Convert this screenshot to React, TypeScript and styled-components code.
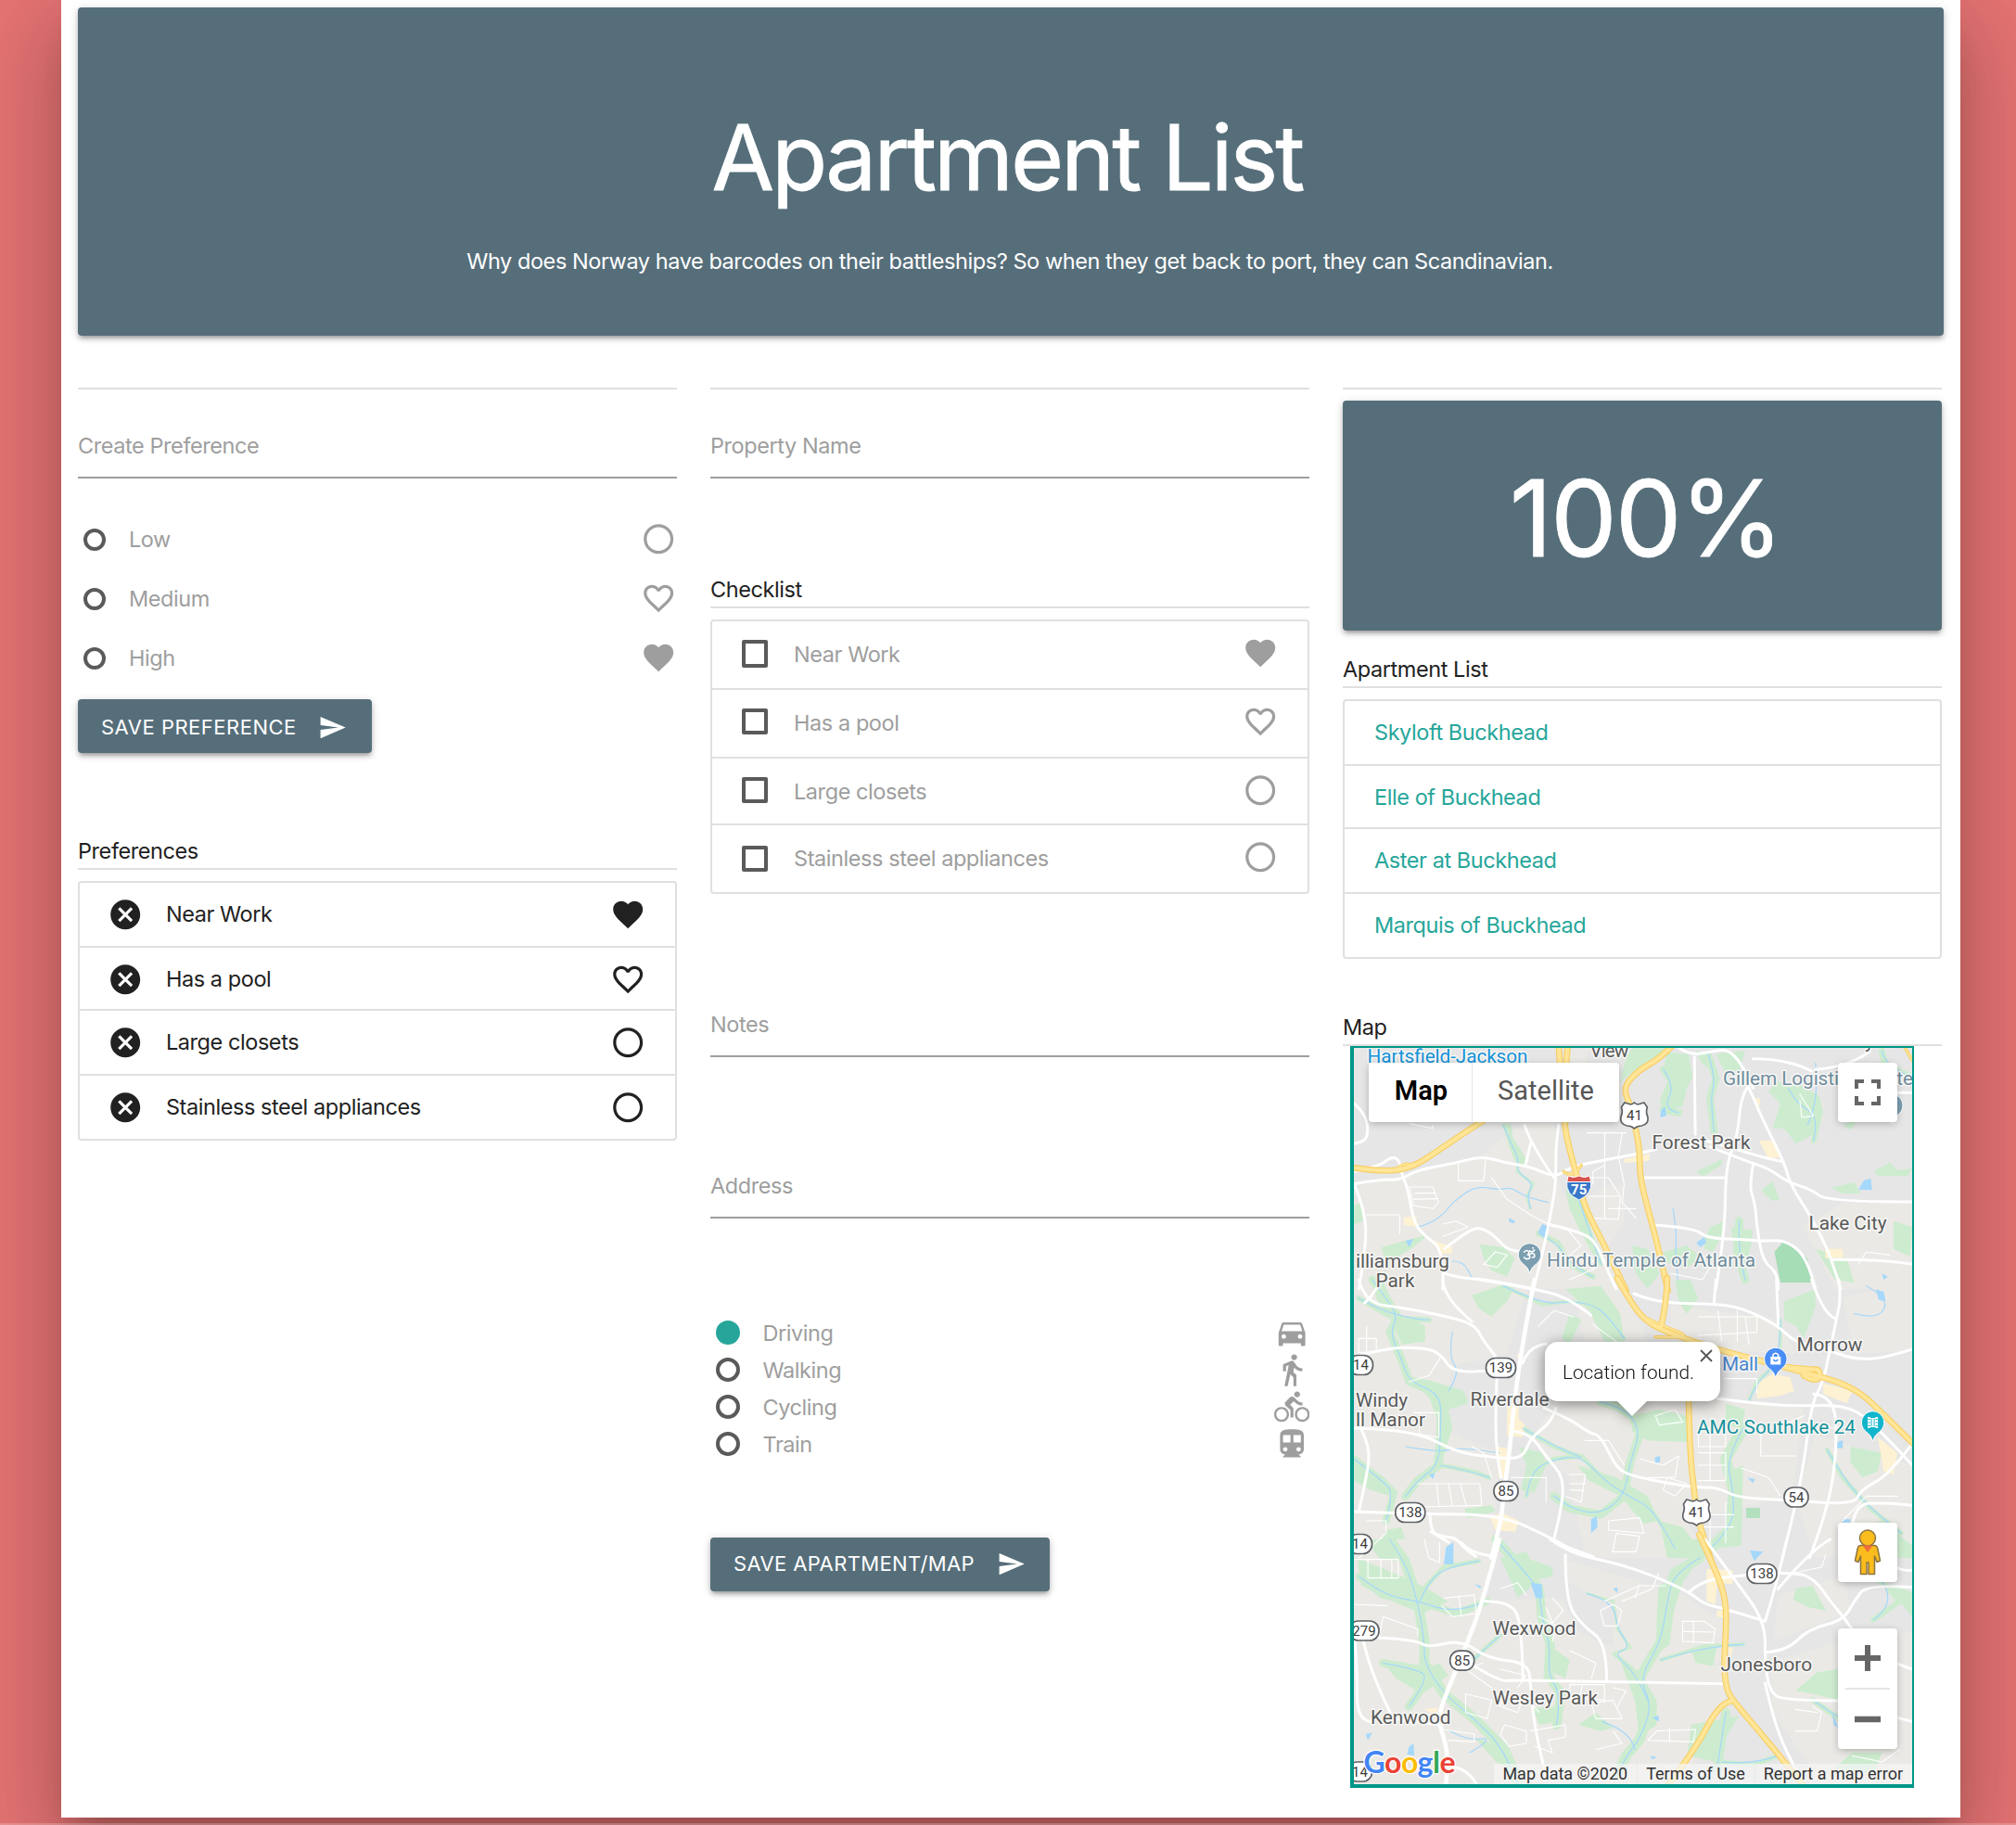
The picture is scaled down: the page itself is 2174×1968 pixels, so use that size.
import React from "react";
import styled, { createGlobalStyle, css } from "styled-components";
import {
  MdCancel,
  MdDirectionsBike,
  MdDirectionsCar,
  MdDirectionsTransit,
  MdDirectionsWalk,
  MdFavorite,
  MdFavoriteBorder,
  MdRadioButtonUnchecked,
  MdSend,
} from "react-icons/md";

/* ---------- palette ---------- */

const slate = "#566e7a";
const teal = "#26a69a";
const grey = "#9e9e9e";
const rule = "#e0e0e0";
const ink = "#212121";

const raised = css`
  box-shadow: 0 4px 4px 0 rgba(0, 0, 0, 0.14), 0 6px 2px -4px rgba(0, 0, 0, 0.12),
    0 2px 10px 0 rgba(0, 0, 0, 0.2);
`;

const GlobalStyle = createGlobalStyle`
  * { box-sizing: border-box; }
  html, body { margin: 0; padding: 0; }
  body {
    height: 1968px;
    overflow: hidden;
    background: #e57373;
    color: ${ink};
    font: 400 23.5px/36px Inter, "Liberation Sans", sans-serif;
    letter-spacing: -0.43px;
  }
`;

/* ---------- page frame ---------- */

const Page = styled.div`
  height: 1968px;
  display: flex;
  flex-direction: column;
  justify-content: space-between;
`;

const Container = styled.main`
  width: 2048px;
  height: 1960px;
  margin-left: 66px;
  padding: 8px 18px 0;
  background: #fff;
  box-shadow: 0 48px 76px 6px rgba(0, 0, 0, 0.14), 0 18px 92px 16px rgba(0, 0, 0, 0.12),
    0 22px 30px -14px rgba(0, 0, 0, 0.2);
`;

const BottomEdge = styled.div`
  width: 100%;
  height: 2px;
  background: rgba(255, 255, 255, 0.22);
  z-index: 1;
`;

const Hero = styled.header`
  ${raised}
  height: 354px;
  display: flex;
  flex-direction: column;
  align-items: center;
  border-radius: 4px;
  background: ${slate};
  color: #fff;
`;

const HeroTitle = styled.h1`
  margin: 103px 0 0;
  padding-right: 8px;
  font-size: 98px;
  font-weight: 400;
  line-height: 118px;
  letter-spacing: -2.9px;
  -webkit-text-stroke: 0.8px #fff;
`;

const HeroText = styled.p`
  margin: 35px 2px 0 0;
`;

const Columns = styled.div`
  display: grid;
  grid-template-columns: repeat(3, 646px);
  column-gap: 36px;
  margin-top: 56px;
`;

const Column = styled.section`
  display: flex;
  flex-direction: column;
  align-items: stretch;
  border-top: 2px solid ${rule};
`;

/* ---------- form parts ---------- */

const Field = styled.label<{ $gap?: number }>`
  height: 96px;
  margin-top: ${(p) => p.$gap ?? 0}px;
  padding-top: 43px;
  border-bottom: 2px solid ${grey};
  color: ${grey};
`;

const RadioGroup = styled.div<{ $gap: number }>`
  display: flex;
  flex-direction: column;
  margin-top: ${(p) => p.$gap}px;
`;

const RadioRow = styled.label<{ $height: number; $size: number; $end: number }>`
  display: grid;
  grid-template-columns: ${(p) => p.$size}px 1fr auto;
  column-gap: ${(p) => (p.$size === 24 ? 25 : 24.5)}px;
  align-items: center;
  height: ${(p) => p.$height}px;
  padding: 0 ${(p) => p.$end}px 0 6px;
  color: ${grey};
  svg {
    display: block;
    margin-top: ${(p) => (p.$size === 24 ? -2 : 0)}px;
  }
`;

const RadioLabel = styled.span<{ $drop: number }>`
  padding-top: ${(p) => p.$drop}px;
`;

const RadioDot = styled.span<{ $size: number; $on?: boolean }>`
  width: ${(p) => p.$size}px;
  height: ${(p) => p.$size}px;
  border-radius: 50%;
  border: 4px solid ${(p) => (p.$on ? teal : "#5a5a5a")};
  background: ${(p) => (p.$on ? teal : "transparent")};
`;

const RaisedButton = styled.button<{ $gap: number; $lift: number; $track: number }>`
  ${raised}
  align-self: flex-start;
  display: flex;
  align-items: flex-start;
  gap: ${(p) => 24 - p.$track}px;
  height: 58px;
  margin: ${(p) => p.$gap}px 0 0;
  padding: ${(p) => 12 - p.$lift}px 26.3px 0 25px;
  border: 0;
  border-radius: 4px;
  background: ${slate};
  color: #fff;
  font: 400 22px/36px Inter, "Liberation Sans", sans-serif;
  letter-spacing: ${(p) => p.$track}px;
  text-transform: uppercase;
  svg {
    display: block;
    margin-top: 3px;
  }
`;

/* ---------- lists ---------- */

const SectionTitle = styled.h2<{ $gap: number }>`
  height: 38px;
  margin: ${(p) => p.$gap}px 0 0;
  border-bottom: 2px solid ${rule};
  font: inherit;
`;

const Collection = styled.ul<{ $rows: string }>`
  display: grid;
  grid-template-rows: ${(p) => p.$rows};
  margin: 12px 0 0;
  padding: 0;
  border: 2px solid ${rule};
  border-radius: 4px;
  list-style: none;
`;

const Checkbox = styled.span`
  width: 28px;
  height: 28px;
  margin: 20px 0 0 -1px;
  border: 4px solid #5a5a5a;
  border-radius: 2px;
`;

const Item = styled.li<{ $muted?: boolean }>`
  display: flex;
  align-items: flex-start;
  padding: 0 36px 0 33px;
  color: ${(p) => (p.$muted ? grey : ink)};
  border-bottom: 2px solid ${rule};
  &:first-child ${Checkbox} {
    height: 30px;
  }
  &:last-child {
    border-bottom: 0;
  }
  &:last-child ${Checkbox} {
    margin-top: 22px;
  }
`;

const ItemIcon = styled.span`
  display: flex;
  align-items: center;
  height: 69px;
  margin: 0 -4px 0 -3px;
`;

const ItemText = styled.span<{ $top: number; $start: number }>`
  flex: 1;
  margin: ${(p) => p.$top}px 0 0 ${(p) => p.$start}px;
`;

const AptLink = styled.a`
  margin: 16px 0 0 -1px;
  color: ${teal};
`;

const Score = styled.div`
  ${raised}
  height: 248px;
  display: flex;
  align-items: center;
  justify-content: center;
  margin-top: 12px;
  padding: 6px 0 0 7px;
  border-radius: 4px;
  background: ${slate};
  color: #fff;
  font-size: 114px;
  line-height: 140px;
  letter-spacing: -2.2px;
  -webkit-text-stroke: 0.8px #fff;
`;

/* ---------- map ---------- */

const MapFrame = styled.div`
  position: relative;
  width: 608px;
  height: 800px;
  margin-left: 8px;
  border: solid #009688;
  border-width: 2px 2px 4px 4px;
  overflow: hidden;
  font-family: Roboto, "Liberation Sans", sans-serif;
  letter-spacing: 0;
`;

const MapCanvas = styled.svg`
  display: block;
  width: 602px;
  height: 794px;
`;

const MapControl = styled.div<{ $top: number }>`
  position: absolute;
  top: ${(p) => p.$top}px;
  right: 16px;
  width: 64px;
  min-height: 64px;
  display: flex;
  flex-direction: column;
  align-items: center;
  justify-content: center;
  border-radius: 4px;
  background: #fff;
  box-shadow: 0 2px 8px -1px rgba(0, 0, 0, 0.3);
`;

const ZoomCell = styled.div`
  display: flex;
  align-items: center;
  justify-content: center;
  height: 64px;
  width: 48px;
  & + & {
    border-top: 2px solid #e6e6e6;
    height: 66px;
  }
`;

const TypeSwitch = styled.div`
  position: absolute;
  top: 16px;
  left: 16px;
  display: flex;
  height: 64px;
  border-radius: 4px;
  background: #fff;
  box-shadow: 0 2px 8px -1px rgba(0, 0, 0, 0.3);
`;

const TypeOption = styled.span<{ $on?: boolean }>`
  width: ${(p) => (p.$on ? 111 : 159)}px;
  text-align: center;
  font-size: 29px;
  line-height: 60px;
  font-weight: ${(p) => (p.$on ? 600 : 400)};
  padding-left: ${(p) => (p.$on ? 2 : 0)}px;
  color: ${(p) => (p.$on ? "#000" : "#565656")};
  & + & {
    border-left: 1px solid #e6e6e6;
  }
`;

const InfoWindow = styled.div`
  position: absolute;
  left: 206px;
  top: 317px;
  width: 189px;
  height: 64px;
  padding: 15px 0 0 19px;
  border-radius: 14px;
  background: #fff;
  color: #111;
  font-size: 20.8px;
  font-weight: 300;
  line-height: 36px;
  white-space: nowrap;
  filter: drop-shadow(0 3px 8px rgba(0, 0, 0, 0.45));
  &::after {
    content: "";
    position: absolute;
    left: 77px;
    top: 63px;
    border: solid transparent;
    border-width: 17px 17px 0;
    border-top-color: #fff;
  }
  svg {
    position: absolute;
    right: 8px;
    top: 8px;
  }
`;

const Credits = styled.div`
  position: absolute;
  right: 0;
  bottom: 0;
  display: flex;
  height: 22px;
  font-size: 18px;
  color: #333;
  white-space: nowrap;
`;

const Credit = styled.span`
  padding: 0 10px 0 9px;
  background: rgba(245, 245, 245, 0.72);
  line-height: 21px;
  & + & {
    border-left: 1px solid rgba(225, 225, 225, 0.5);
  }
`;

type Pt = string;

/* Rounds the corners of a run of "x,y" points by curving through the midpoints. */
const curve = (pts: Pt) => {
  const p = pts.split(" ").map((s) => s.split(",").map(Number));
  let d = `M${p[0][0]} ${p[0][1]}`;
  for (let i = 1; i < p.length - 1; i++) {
    const [x, y] = p[i];
    const [nx, ny] = p[i + 1];
    const last = i === p.length - 2;
    d += `Q${x} ${y} ${last ? nx : (x + nx) / 2} ${last ? ny : (y + ny) / 2}`;
  }
  if (p.length === 2) d += `L${p[1][0]} ${p[1][1]}`;
  return d;
};

/* Terrain is drafted on three sheets stacked from north to south. */
const sheets = [
  "translate(-20 -40) scale(0.42092 0.33333)",
  "translate(-20 250) scale(0.42092 0.33333)",
  "translate(-20 530) scale(0.46811 0.33333)",
];

const suburbs: Pt[][] = [
  [
    "48,560 160,540 370,470 480,360 560,360 570,540 600,640 700,560 740,570 740,690 700,760 740,900 48,900",
    "590,130 650,120 640,180 590,200",
    "1300,620 1478,620 1478,900 1280,900 1200,700",
  ],
  [
    "48,0 500,0 440,240 300,280 270,480 420,560 400,900 48,900",
    "600,0 730,0 800,200 990,380 1200,420 1170,700 900,780 950,900 640,900 600,640 500,520 560,400 640,200",
    "860,80 1130,130 1180,240 1000,230 860,170",
    "1230,500 1478,600 1478,900 1230,900 1180,720",
    "1300,60 1478,0 1478,230 1330,240",
  ],
  [
    "43,0 370,0 340,200 520,190 560,300 620,340 890,410 900,520 800,792 43,792",
    "520,60 800,180 890,260 890,400 640,390 640,220 540,140",
    "1000,400 1160,330 1329,300 1329,792 1120,792 1010,560",
    "1020,180 1170,120 1190,230 1010,330",
  ],
];

const parks: Pt[][] = [
  [
    "730,230 745,150 760,120 855,120 820,150 770,190",
    "850,135 905,140 915,215 900,250 890,310 850,320 830,295 855,215 840,190",
    "925,130 960,140 955,185 935,165",
    "975,140 1050,128 1035,195 1000,200",
    "1130,230 1185,235 1240,275 1250,330 1225,400 1180,430 1150,380 1120,380 1140,300 1110,260",
    "925,520 990,480 990,498 940,538",
    "1090,580 1120,553 1138,610 1118,615",
    "1380,520 1420,490 1440,515 1478,510 1465,535 1390,535",
    "1270,572 1330,555 1345,590 1300,592",
    "1345,185 1400,165 1450,185 1455,205 1390,200",
    "945,740 960,700 1000,678 990,725 968,780 945,770",
    "1015,700 1070,710 1065,760 1050,830 1025,830",
    "1430,680 1478,700 1472,795 1430,770",
    "48,630 70,618 70,680 48,692",
    "118,765 160,750 240,722 200,765 130,818",
    "1300,370 1340,350 1320,385",
    "1230,770 1310,800 1330,880 1280,870",
    "840,780 900,760 940,800 900,830 850,815",
    "430,365 450,365 455,410 490,480 492,510 465,500 445,440",
    "590,575 615,590 650,700 690,800 670,810 630,720 600,640",
    "370,755 430,765 460,800 440,860 400,840 380,800",
    "760,760 800,770 830,850 800,900 770,850",
  ],
  [
    "350,50 420,20 460,25 440,70 400,120 365,90",
    "140,120 200,130 230,150 230,200 170,210",
    "180,310 240,325 330,360 340,400 290,420 300,480 270,600 250,590 270,480 240,380",
    "470,540 530,560 540,600 510,690 475,680 490,600",
    "620,600 720,640 800,700 830,780 790,790 730,700 650,650",
    "760,440 830,420 900,440 905,525 800,520 760,490",
    "1150,70 1230,30 1230,90 1200,190 1180,150 1150,130",
    "1000,400 1050,420 1040,480 1000,470",
    "1320,540 1400,560 1390,620 1350,640 1320,590",
    "830,780 890,800 920,850 910,900 850,900",
    "1010,620 1045,600 1040,860 970,870 1000,800",
    "130,810 170,800 180,850 150,900 110,870",
    "330,740 400,730 410,750 340,770",
    "1330,800 1400,780 1478,860 1478,900 1340,900",
    "48,590 100,620 140,700 90,680 48,650",
    "590,30 680,20 730,110 740,200 690,200 650,100",
    "600,110 630,130 600,210 580,190",
    "90,0 120,0 150,80 130,110 105,60",
    "870,0 910,0 930,60 900,110 880,70",
  ],
  [
    "50,60 120,100 200,150 260,200 200,240 130,200 60,150",
    "70,0 130,0 140,70 100,60",
    "440,60 500,90 500,120 460,130 430,90",
    "745,150 830,80 800,140 780,230 770,340 740,370 740,260",
    "1060,160 1100,150 1130,230 1090,220 1055,195",
    "455,545 520,540 510,590 470,600",
    "820,360 880,340 870,410 830,400",
    "1060,490 1110,430 1158,420 1158,520 1100,500",
    "650,370 700,430 740,520 740,600 700,640 690,520",
    "110,400 190,430 240,400 260,440 200,500 140,450",
    "820,600 930,570 900,640 880,720 810,700",
    "320,640 400,680 430,760 370,720",
    "1240,130 1329,170 1329,250 1300,200",
    "1190,690 1260,690 1240,760 1150,740",
    "380,60 440,40 470,130 420,190 400,120",
    "560,600 600,560 640,610 610,620",
    "780,0 860,0 850,60 790,50",
    "490,340 540,390 530,450 500,430",
  ],
];

const water: Pt[][] = [
  [
    "835,320 845,310 848,340 832,345",
    "1355,548 1372,543 1375,580 1340,578",
    "925,750 945,732 950,750 935,765",
    "445,670 460,680 458,688 445,683",
    "180,745 200,738 190,765",
    "530,690 550,700 535,735 520,715",
    "1400,850 1415,860 1405,870",
    "495,800 515,800 505,820",
  ],
  [
    "818,575 832,570 832,590 820,595",
    "1385,30 1405,40 1410,70 1392,65",
    "285,870 300,840 300,900 282,900",
    "655,775 670,765 672,800 655,820",
    "1285,525 1300,520 1300,545 1285,545",
    "1055,640 1075,645 1070,658",
    "240,630 255,625 250,645",
    "1300,775 1320,775 1318,785 1298,785",
  ],
  [
    "255,25 272,10 272,80 250,80",
    "450,140 475,145 478,190 462,190",
    "955,35 985,40 965,70",
    "320,145 335,150 335,160",
    "70,630 85,625 75,650",
    "730,575 745,570 745,590",
    "170,670 180,660 182,700 165,695",
    "1145,560 1158,610 1148,600",
    "640,160 650,155 650,175",
    "725,700 742,705 730,712",
  ],
];

/* Each creek carries the width of the green belt along its banks. */
const creeks: [number, Pt][][] = [
  [
    [3, "430,370 450,430 470,480 465,520 508,560 490,600 500,640"],
    [0, "210,700 240,690 280,655 300,620 360,565 420,580 450,570 490,605 545,620"],
    [6, "1160,250 1180,300 1240,340 1225,420"],
    [8, "955,140 975,220 960,280 970,390"],
    [0, "865,640 875,720 870,790 880,900"],
    [7, "1400,130 1410,180 1470,210"],
    [8, "840,190 870,240 840,320 880,330"],
    [4, "620,600 660,740 680,820"],
    [9, "1035,680 1030,780 1050,870"],
    [0, "300,810 330,810 350,870 380,900"],
    [6, "520,720 570,750 600,820 660,860"],
    [0, "1230,170 1240,290 1210,370"],
  ],
  [
    [9, "95,0 130,60 160,120 140,170 170,260 190,330 270,370 270,480 265,600 210,650 180,700"],
    [4, "430,20 530,80 600,70 660,80 700,120 740,190"],
    [6, "60,60 150,125 240,130"],
    [9, "680,395 720,410 760,440 780,500 755,590 740,700 680,760 600,740 560,700"],
    [5, "490,700 500,620 560,580 630,570 690,650 750,700 800,730 840,800 870,870"],
    [0, "300,170 290,250 320,300 290,360"],
    [12, "1045,480 1000,580 1020,680 1020,800 960,870"],
    [5, "270,600 350,620 395,640"],
    [0, "180,540 270,560 310,540 420,560"],
    [4, "1140,130 1140,260 1080,330 1060,390"],
    [0, "1330,110 1390,130 1420,60 1360,20"],
    [5, "1260,550 1300,640 1370,740 1450,820"],
    [5, "480,480 560,540 630,575"],
    [8, "48,580 120,650 150,690 130,780"],
  ],
  [
    [11, "125,0 160,70 190,200 205,330 205,400 250,500 320,580 390,680 420,792"],
    [10, "370,0 420,80 470,160 475,250 495,340 490,440 520,500 510,600"],
    [11, "840,60 780,110 765,200 750,330 700,450 730,540 700,650 670,700 650,760"],
    [3, "580,175 640,200 650,290 680,350 640,370 690,430 720,520"],
    [9, "110,400 190,420 215,450 170,540"],
    [5, "330,70 250,90 210,150 195,200"],
    [10, "900,560 890,640 880,740"],
    [0, "265,620 300,650 370,640 310,690"],
    [4, "750,390 850,345 940,340"],
    [0, "615,590 680,620 690,680"],
    [8, "55,120 110,180 190,200 280,240 350,200"],
    [6, "1100,520 1180,600 1250,640"],
    [6, "1250,120 1300,200 1240,260"],
    [5, "380,310 340,360 310,400"],
    [5, "890,720 960,730 1020,700"],
  ],
];

const lanes: Pt[][] = [
  [
    "645,395 745,395", "690,395 690,500 660,520 660,560", "735,395 725,470 740,560 735,620 770,670",
    "190,570 250,570 265,620 250,640 200,630 190,570", "205,590 255,590", "200,610 260,608",
    "80,660 165,660 165,720", "275,690 310,680 340,700 275,730", "315,490 315,550 380,550 385,480",
    "400,540 440,610 500,660 560,700", "640,540 700,540 730,600 725,675 650,670", "690,480 690,670",
    "650,600 725,600", "380,820 410,780 440,790 415,830 380,820", "570,800 650,790 670,830 600,870",
    "590,700 630,760 600,790", "1190,270 1225,340 1195,345 1190,290", "190,365 250,380 250,370",
    "1340,820 1360,780 1420,790", "700,640 770,640", "860,850 940,870 960,830",
  ],
  [
    "60,190 105,190 105,235 60,235 60,190", "80,150 80,235", "190,330 240,310 270,250",
    "200,430 265,430 265,510 215,500 215,430", "600,630 640,630 630,720 590,700", "600,660 640,660",
    "600,680 635,682", "210,660 370,660 375,730 220,735", "260,660 265,730", "290,660 300,730",
    "320,660 335,730", "780,580 840,600 880,570 870,640 800,640", "820,440 870,420 890,460 830,470 820,440",
    "930,480 1000,480 1000,540 930,540 930,480", "930,560 1000,560 1000,650 930,650", "960,480 960,650",
    "930,600 1000,600", "930,120 1080,120 1080,170 930,180", "980,100 990,200", "1030,100 1030,200",
    "1050,120 1060,210", "1090,480 1090,570 1180,570", "1130,480 1200,440", "660,145 720,200 740,260",
    "520,150 560,100 610,120", "700,780 780,770 790,820 700,810 700,780", "850,640 900,660 870,700 840,680 850,640",
    "80,780 130,780 130,820 60,900", "450,640 540,640 540,720", "1000,320 1080,320 1080,370",
    "1200,470 1280,480", "1300,780 1360,700 1440,700", "640,520 700,520 740,600", "960,720 960,860",
    "1000,720 1000,850", "930,760 1020,760", "930,800 1020,800", "1040,610 1110,640 1140,700",
    "720,820 780,830 770,880 710,880 720,820", "350,540 380,560 400,640",
  ],
  [
    "45,65 145,65 145,125 75,125 75,65", "105,65 105,125", "130,65 130,125", "250,190 320,180 325,240 270,250 245,215",
    "285,185 290,245", "380,160 420,140 440,180", "500,190 525,230 500,270 485,220", "540,470 620,470 620,520 540,510 540,470",
    "570,470 560,520", "640,480 670,490 650,540", "610,230 640,210 660,230 650,280 620,280 610,230",
    "800,265 850,265 875,290 870,335 800,330 800,265", "825,265 825,330", "800,298 872,300",
    "620,200 700,150 760,150", "700,150 690,190", "660,200 730,160 745,110", "390,600 440,620 440,660 400,670 380,630 390,600",
    "450,620 530,600 530,640 490,650 500,690 460,670", "720,650 825,655 830,615 740,620 720,650", "770,610 770,655",
    "250,615 320,630 320,655 260,650", "390,500 430,520 420,560 380,540 390,500", "590,530 640,520 660,580 600,580 590,530",
    "1050,110 1120,90 1130,50", "205,0 215,60 240,75 240,10", "340,400 300,420 360,480", "45,210 120,215",
    "100,320 110,250 190,290 190,310", "540,360 600,400 590,450", "1100,540 1120,560 1110,620 1060,620",
    "380,420 440,440 420,480", "470,250 510,280 500,330", "300,500 360,520 350,580 300,560 300,500",
    "640,620 660,660 600,680", "1190,700 1260,720 1300,680", "1060,550 1110,560", "430,500 470,560",
  ],
];

const roads: Pt[][] = [
  [
    "48,560 120,545 165,548 210,515 300,495 375,470 430,490 500,505 565,540 600,505 700,480 780,462 822,448",
    "545,690 640,718 672,760 700,850 720,900",
    "572,370 565,430 565,540 560,600 545,700 528,800 508,900",
    "960,440 1060,490 1110,510 1160,555 1220,578 1262,618 1478,618",
    "1055,240 1075,290 1090,340 1150,490 1165,560 1215,660 1245,730 1270,800 1295,900",
    "1060,240 1040,270 1030,410 1000,500 998,720 975,900",
    "1148,488 1110,480 1020,445 950,420",
    "785,540 998,540",
    "812,692 920,702 950,735 1040,740 1100,745 1155,742 1210,800 1230,900",
    "1070,500 1060,570 1075,620 1080,700 1095,810 1135,850 1135,900",
    "48,300 75,330 85,390 75,425 48,430",
    "48,520 110,505 145,470 165,485 170,530 185,570 200,680 225,725 280,775 275,900",
    "280,770 340,710 375,700 415,735 440,775 480,780",
    "280,850 320,865 400,870 510,900",
    "880,120 910,145 970,130 1010,125 1050,190 1070,250",
    "1070,155 1160,155 1220,195",
    "920,150 922,400",
    "485,370 500,430 560,540",
    "500,430 487,500",
    "1270,805 1400,803 1478,820",
    "48,560 75,640 80,760 60,900",
    "1370,130 1320,180 1230,190",
    "1440,265 1478,265",
  ],
  [
    "370,0 515,30 600,60 655,115",
    "60,0 75,75 180,92 310,125 360,150 380,200 420,260 412,330 410,560 425,640",
    "275,0 278,60 350,135",
    "120,0 90,60 75,75",
    "48,250 130,220 230,220 270,240 305,305 385,295",
    "540,208 495,215 480,270",
    "535,415 600,450 650,495 680,505 720,610 760,635 860,660 920,672 980,672 1030,705 1150,712 1330,728 1345,680 1420,630 1478,530",
    "765,45 820,75 970,78 1040,90 1130,145 1180,205 1260,225 1320,255 1400,257 1478,225",
    "975,0 970,78",
    "1130,0 1135,145",
    "1220,0 1250,110 1280,125",
    "1290,0 1295,60 1285,120 1265,240 1250,330 1220,400 1200,600 1170,780 1145,900",
    "980,385 1110,405 1200,408 1300,405 1370,450 1478,600",
    "1225,370 1280,375 1285,560 1260,750 1215,900",
    "48,480 200,485 310,558 400,575 480,580 500,510 555,460 565,415",
    "450,490 495,492 545,580 585,640 580,740 560,840",
    "48,750 220,758 425,760 560,840 600,870 660,895",
    "65,480 90,540 80,640 60,750",
    "242,760 245,815 270,830 310,835 330,870 360,895",
    "1478,730 1400,720 1330,728 1325,800",
    "245,815 290,850",
  ],
  [
    "495,0 540,45 640,75 720,110 815,170 850,210 900,225 990,265",
    "530,50 530,200 570,280 625,335 625,458",
    "852,0 920,130 990,265 990,400 1000,490 1030,522 1160,522",
    "1040,0 1020,130 990,265",
    "815,170 840,140 900,120 1060,105 1105,130 1140,200 1170,250 1190,290",
    "1140,0 1095,35 1020,160",
    "995,365 1040,360 1090,290 1170,262 1195,200 1225,145 1329,155",
    "100,318 185,325 212,350 290,325 350,385 445,400 450,480 460,620 480,735",
    "320,410 380,460 410,455 560,460 893,467",
    "345,200 405,200 430,280 432,455",
    "65,330 80,430 130,570",
    "990,465 1010,590 1050,720 1080,792",
    "290,10 310,45 365,55",
    "45,320 50,420 50,590 85,590",
    "130,580 240,600",
    "250,735 300,730 325,792",
    "1240,0 1280,110 1329,100",
    "1290,400 1329,420",
    "1290,575 1329,590",
  ],
];

const trunks: Pt[][] = [
  [],
  ["510,0 480,200 458,400 445,570 430,700 425,780 400,900"],
  ["378,0 340,200 300,350 240,550 240,600 262,700 255,792"],
];

const centres: Pt[][] = [
  [
    "175,668 208,665 208,700 175,692", "740,480 805,462 805,485 740,492", "1085,420 1120,420 1140,475 1110,478",
    "245,740 300,765 300,785 270,785", "1255,770 1300,770 1300,800 1255,800", "1065,280 1090,285 1085,310",
  ],
  [
    "1085,330 1120,305 1165,315 1175,360 1140,375 1080,385", "1250,335 1325,360 1310,400 1250,370",
    "440,400 470,410 470,450 485,470 480,510 440,505", "415,540 440,545 440,640 418,640",
    "395,765 430,755 470,780 460,815 410,810", "1390,510 1440,560 1430,630 1405,620", "465,240 482,240 475,290",
  ],
  ["855,95 915,100 915,145 880,140 875,210 855,200", "205,548 235,545 235,575", "878,230 895,230 895,255 878,250", "905,350 915,350 910,400"],
];

const freeways: Pt[][] = [
  [
    "48,508 130,522 200,505 260,455 330,395 380,355",
    "572,110 585,360 600,450 620,540 640,640 690,760 745,905",
    "595,120 588,200 590,360",
    "862,115 830,155 780,190 745,235 742,270 762,320 768,375 780,450 780,540 805,660 830,780 852,905",
    "1455,110 1478,160",
    "150,520 175,485 200,500",
    "585,520 605,545 630,500",
  ],
  [
    "722,-5 760,80 800,140 870,180 990,230 1090,262 1200,300 1290,330 1350,370 1400,430 1480,530",
    "850,-5 850,60 835,150",
    "1150,282 1210,290 1245,290 1235,335 1200,310",
    "905,380 908,560 920,690 928,780 962,905",
    "790,120 840,150 920,190 820,185",
  ],
  [
    "838,-15 880,110 900,200 900,300 895,400 900,480 915,520 1000,660 1078,795",
    "912,523 885,530 825,690 765,795",
  ],
];

interface Place {
  t: string;
  x: number;
  y: number;
  w: number;
  c?: string;
}

const places: Place[] = [
  { t: "Hartsfield-Jackson", x: 14.5, y: 16, w: 173, c: "#1592d8" },
  { t: "View", x: 254.4, y: 9.5, w: 42 },
  { t: "y", x: 551, y: 0, w: 10 },
  { t: "Gillem Logistics Cente", x: 398, y: 40, w: 205, c: "#6f8c9d" },
  { t: "Forest Park", x: 321.5, y: 108.5, w: 106 },
  { t: "Lake City", x: 490.5, y: 196, w: 84 },
  { t: "Hindu Temple of Atlanta", x: 208, y: 236, w: 225, c: "#6f8c9d" },
  { t: "illiamsburg", x: 2, y: 237, w: 101 },
  { t: "Park", x: 23.5, y: 258, w: 42 },
  { t: "Morrow", x: 477.5, y: 326.5, w: 71 },
  { t: "Mall", x: 397, y: 347.5, w: 39, c: "#4b86cf" },
  { t: "Riverdale", x: 125.5, y: 385.5, w: 85 },
  { t: "Windy", x: 2, y: 386.5, w: 56 },
  { t: "ll Manor", x: 2, y: 407.5, w: 75 },
  { t: "AMC Southlake 24", x: 370, y: 416, w: 171, c: "#14919c" },
  { t: "Wexwood", x: 149.5, y: 633, w: 90 },
  { t: "Wesley Park", x: 149.5, y: 707.5, w: 113.5 },
  { t: "Jonesboro", x: 395.5, y: 671.5, w: 98.5 },
  { t: "Kenwood", x: 18, y: 728.5, w: 86.5 },
];

const routes: [string, number, number][] = [
  ["14", 7.5, 342],
  ["139", 158.5, 345],
  ["85", 164, 478],
  ["138", 60.8, 501],
  ["54", 477, 484.5],
  ["14", 6.5, 535],
  ["138", 440, 567],
  ["279", 11, 628.5],
  ["85", 116.7, 660.7],
  ["14", 6.5, 780.5],
];

const RouteBadge = ({ n, x, y }: { n: string; x: number; y: number }) => {
  const w = n.length === 3 ? 32 : 26;
  return (
    <g>
      <rect x={x - w / 2} y={y - 10.5} width={w} height={21} rx={10} fill="#fff" stroke="#5f6367" strokeWidth={1.7} />
      <text x={x} y={y + 5.3} textAnchor="middle" fontSize={15} fill="#3c3c3c">
        {n}
      </text>
    </g>
  );
};

const UsShield = ({ x, y }: { x: number; y: number }) => (
  <g transform={`translate(${x} ${y})`}>
    <path
      d="M-10.500-13.500L-5.500-12Q-2.500-11 0-13.500Q2.500-11 5.500-12L10.500-13.500L14-8.500Q12-4 14.500 2Q16 9.500 8 11.500Q3 11.500 0 14.500Q-3 11.500-8 11.500Q-16 9.500-14.500 2Q-12-4-14-8.500Z"
      fill="#fff"
      stroke="#5f6367"
      strokeWidth={1.7}
    />
    <text y={5.5} textAnchor="middle" fontSize={15} fill="#3c3c3c">
      41
    </text>
  </g>
);

const PinShape = ({ x, y, c, children }: { x: number; y: number; c: string; children?: React.ReactNode }) => (
  <g transform={`translate(${x} ${y})`}>
    <path d="M0 20Q-1.500 14-7 10A12.200 12.200 0 1 1 7 10Q1.500 14 0 20Z" fill={c} stroke="#fff" strokeWidth={1} />
    {children}
  </g>
);

const Sheet = ({ i, layer }: { i: number; layer: "land" | "roads" }) => (
  <g transform={sheets[i]} fill="none" strokeLinejoin="round" strokeLinecap="round">
    {layer === "land" ? (
      <>
        {suburbs[i].map((p, k) => <polygon key={k} points={p} fill="#ebe9e5" />)}
        {creeks[i].map(([w, p], k) =>
          w > 0 ? <polyline key={k} points={p} stroke="#cdeccf" strokeWidth={w} vectorEffect="non-scaling-stroke" /> : null,
        )}
        {parks[i].map((p, k) => <polygon key={k} points={p} fill="#cdeccf" />)}
        {centres[i].map((p, k) => <polygon key={k} points={p} fill="#fdf2d3" />)}
        {creeks[i].map(([, p], k) => (
          <path key={k} d={curve(p)} stroke="#a5d8fb" strokeWidth={1.2} vectorEffect="non-scaling-stroke" />
        ))}
        {water[i].map((p, k) => <polygon key={k} points={p} fill="#a5d8fb" />)}
      </>
    ) : (
      <>
        {lanes[i].map((p, k) => (
          <polyline key={k} points={p} stroke="#fff" strokeWidth={1.1} vectorEffect="non-scaling-stroke" />
        ))}
        {roads[i].map((p, k) => (
          <path key={k} d={curve(p)} stroke="#fff" strokeWidth={3} vectorEffect="non-scaling-stroke" />
        ))}
        {trunks[i].map((p, k) => (
          <path key={k} d={curve(p)} stroke="#fff" strokeWidth={4.6} vectorEffect="non-scaling-stroke" />
        ))}
        {freeways[i].map((p, k) => (
          <path key={k} d={curve(p)} stroke="#f8cd62" strokeWidth={k > 3 ? 3.5 : 6.6} vectorEffect="non-scaling-stroke" />
        ))}
        {freeways[i].map((p, k) => (
          <path key={k} d={curve(p)} stroke="#ffe596" strokeWidth={k > 3 ? 1.8 : 4.4} vectorEffect="non-scaling-stroke" />
        ))}
      </>
    )}
  </g>
);

const logo: [string, string][] = [
  ["G", "#4285f4"],
  ["o", "#ea4335"],
  ["o", "#fbbc05"],
  ["g", "#4285f4"],
  ["l", "#34a853"],
  ["e", "#ea4335"],
];

const Terrain = () => (
  <MapCanvas viewBox="0 0 602 794" fontFamily='Roboto, "Liberation Sans", sans-serif'>
    <rect width={602} height={794} fill="#e6e6e6" />
    {[0, 1, 2].map((i) => <Sheet key={i} i={i} layer="land" />)}
    <polygon points="453.500,220 464,208 489,227 494,253 460,253" fill="#a6dcb6" />
    <rect x={423} y={496} width={15} height={11} fill="#b2e0bd" />
    {[0, 1, 2].map((i) => <Sheet key={i} i={i} layer="roads" />)}
    <g transform="translate(242.700 150.500)">
      <path d="M-11.500-12.500Q-6-9.500 0-12.500Q6-9.500 11.500-12.500L13-6H-13Z" fill="#d9534f" stroke="#fff" strokeWidth={1} />
      <path d="M-13-6H13Q14.500 7 0 13.500Q-14.500 7-13-6Z" fill="#3a78c9" stroke="#fff" strokeWidth={1} />
      <text y={7.5} textAnchor="middle" fontSize={15} fontWeight={700} fill="#fff">
        75
      </text>
    </g>
    <UsShield x={302.4} y={72.5} />
    <UsShield x={369.4} y={500.5} />
    {routes.map(([n, x, y], k) => <RouteBadge key={k} n={n} x={x} y={y} />)}
    <PinShape x={189.6} y={223} c="#7b9eb0">
      <path
        d="M-6-3Q-3-6-1-3Q0 0-3 0Q1 0 0 3.500Q-3 6-6 3M0 0Q3-3 5 0Q6 3 3 3M0-4Q3-2 5-5M3.500-7.500V-7"
        fill="none"
        stroke="#fff"
        strokeWidth={1.7}
        strokeLinecap="round"
      />
    </PinShape>
    <PinShape x={454.8} y={335.5} c="#4a8df6">
      <path d="M-5.500-2.500H5.500V6H-5.500Z" fill="#fff" />
      <path d="M-2.800-2.500V-4.500Q0-8 2.800-4.500V-2.500" fill="none" stroke="#fff" strokeWidth={1.6} />
      <path d="M-2.500 0.500Q0 4 2.500 0.500" fill="none" stroke="#4a8df6" strokeWidth={1.4} />
    </PinShape>
    <PinShape x={559.6} y={404} c="#12b5cb">
      <path d="M-5.500-6H-3V-5H3V-6H5.500V6H3V5H-3V6H-5.500Z" fill="#fff" />
      <path d="M-3-3.500H-5M-3 0H-5M-3 3.500H-5M3-3.500H5M3 0H5M3 3.500H5M-1.500-4V4M1.500-4V4" stroke="#12b5cb" strokeWidth={1} />
    </PinShape>
    <PinShape x={579.8} y={62} c="#7b9eb0" />
    {places.map((p, k) => (
      <text
        key={k}
        x={p.x}
        y={p.y}
        textLength={p.w}
        fontSize={20.8}
        fill={p.c ?? "#5a5a5a"}
        stroke="#f7f7f5"
        strokeWidth={3}
        strokeLinejoin="round"
        paintOrder="stroke"
      >
        {p.t}
      </text>
    ))}
    <text
      x={10.5}
      y={781.5}
      textLength={99}
      fontSize={32}
      fontFamily='Lato, "Liberation Sans", sans-serif'
      fontWeight={700}
      stroke="#fff"
      strokeWidth={2.5}
      paintOrder="stroke"
    >
      {logo.map(([ch, c], k) => (
        <tspan key={k} fill={c}>
          {ch}
        </tspan>
      ))}
    </text>
  </MapCanvas>
);

const Pegman = () => (
  <svg width={30} height={50} viewBox="0 0 30 50">
    <g fill="#fbbc1d" stroke="#8c7440" strokeWidth={1.5} strokeLinejoin="round">
      <path d="M7.500 17.500H22.500Q25 17.500 25.700 20.500L28.500 34L25 35.500L22.500 29V48.500H16V36H14V48.500H7.500V29L5 35.500L1.500 34L4.300 20.500Q5 17.500 7.500 17.500Z" />
      <circle cx={15} cy={9.5} r={8.5} />
    </g>
    <path d="M9.500 17.500H20.500L15 25Z" fill="#ef6c3c" />
  </svg>
);

/* ---------- data ---------- */

type Level = "high" | "medium" | "low";

const LevelIcon = ({ level }: { level: Level }) => {
  if (level === "high") return <MdFavorite size={38.4} />;
  if (level === "medium") return <MdFavoriteBorder size={38.4} />;
  return <MdRadioButtonUnchecked size={38.4} />;
};

const levels: { name: string; level: Level }[] = [
  { name: "Low", level: "low" },
  { name: "Medium", level: "medium" },
  { name: "High", level: "high" },
];

const preferences: { name: string; level: Level }[] = [
  { name: "Near Work", level: "high" },
  { name: "Has a pool", level: "medium" },
  { name: "Large closets", level: "low" },
  { name: "Stainless steel appliances", level: "low" },
];

const modes = [
  { name: "Driving", Icon: MdDirectionsCar },
  { name: "Walking", Icon: MdDirectionsWalk },
  { name: "Cycling", Icon: MdDirectionsBike },
  { name: "Train", Icon: MdDirectionsTransit },
];

const apartments = ["Skyloft Buckhead", "Elle of Buckhead", "Aster at Buckhead", "Marquis of Buckhead"];

export default function App() {
  return (
    <>
      <GlobalStyle />
      <Page>
        <Container>
          <Hero>
            <HeroTitle>Apartment List</HeroTitle>
            <HeroText>
              Why does Norway have barcodes on their battleships? So when they get back to port, they can Scandinavian.
            </HeroText>
          </Hero>
          <Columns>
            <Column>
              <Field>Create Preference</Field>
              <RadioGroup $gap={34}>
                {levels.map((l) => (
                  <RadioRow key={l.name} $height={64} $size={24} $end={1}>
                    <RadioDot $size={24} />
                    <RadioLabel $drop={0}>{l.name}</RadioLabel>
                    <LevelIcon level={l.level} />
                  </RadioRow>
                ))}
              </RadioGroup>
              <RaisedButton $gap={12} $lift={0} $track={0.5}>
                Save Preference
                <MdSend size={31} />
              </RaisedButton>
              <SectionTitle $gap={88}>Preferences</SectionTitle>
              <Collection $rows="70px 68px 70px 68px">
                {preferences.map((p) => (
                  <Item key={p.name}>
                    <ItemIcon>
                      <MdCancel size={38.4} />
                    </ItemIcon>
                    <ItemText $top={16} $start={28.5}>
                      {p.name}
                    </ItemText>
                    <ItemIcon>
                      <LevelIcon level={p.level} />
                    </ItemIcon>
                  </Item>
                ))}
              </Collection>
            </Column>

            <Column>
              <Field>Property Name</Field>
              <SectionTitle $gap={102}>Checklist</SectionTitle>
              <Collection $rows="74px 74px 72px 72px">
                {preferences.map((p) => (
                  <Item key={p.name} $muted>
                    <Checkbox />
                    <ItemText $top={18} $start={28}>
                      {p.name}
                    </ItemText>
                    <ItemIcon>
                      <LevelIcon level={p.level} />
                    </ItemIcon>
                  </Item>
                ))}
              </Collection>
              <Field $gap={80}>Notes</Field>
              <Field $gap={78}>Address</Field>
              <RadioGroup $gap={103}>
                {modes.map(({ name, Icon }, i) => (
                  <RadioRow key={name} $height={40} $size={26} $end={0}>
                    <RadioDot $size={26} $on={i === 0} />
                    <RadioLabel $drop={2}>{name}</RadioLabel>
                    <Icon size={38.4} />
                  </RadioRow>
                ))}
              </RadioGroup>
              <RaisedButton $gap={81} $lift={2} $track={0.37}>
                Save Apartment/Map
                <MdSend size={31} />
              </RaisedButton>
            </Column>

            <Column>
              <Score>100%</Score>
              <SectionTitle $gap={24}>Apartment List</SectionTitle>
              <Collection $rows="70px 68px 70px 68px">
                {apartments.map((a) => (
                  <Item key={a}>
                    <AptLink>{a}</AptLink>
                  </Item>
                ))}
              </Collection>
              <SectionTitle $gap={56}>Map</SectionTitle>
              <MapFrame>
                <Terrain />
                <TypeSwitch>
                  <TypeOption $on>Map</TypeOption>
                  <TypeOption>Satellite</TypeOption>
                </TypeSwitch>
                <MapControl $top={16}>
                  <svg width={30} height={30} viewBox="0 0 30 30" fill="none" stroke="#666" strokeWidth={4}>
                    <path d="M3 11V3H11M19 3H27V11M27 19V27H19M11 27H3V19" />
                  </svg>
                </MapControl>
                <MapControl $top={512}>
                  <Pegman />
                </MapControl>
                <MapControl $top={626}>
                  <ZoomCell>
                    <svg width={28} height={28} viewBox="0 0 28 28" stroke="#666" strokeWidth={6}>
                      <path d="M14 0V28M0 14H28" />
                    </svg>
                  </ZoomCell>
                  <ZoomCell>
                    <svg width={28} height={28} viewBox="0 0 28 28" stroke="#666" strokeWidth={6.5}>
                      <path d="M0 14H28" />
                    </svg>
                  </ZoomCell>
                </MapControl>
                <InfoWindow>
                  Location found.
                  <svg width={14} height={14} viewBox="0 0 14 14" stroke="#555" strokeWidth={1.8}>
                    <path d="M1 1L13 13M13 1L1 13" />
                  </svg>
                </InfoWindow>
                <Credits>
                  <Credit>Map data ©2020</Credit>
                  <Credit>Terms of Use</Credit>
                  <Credit>Report a map error</Credit>
                </Credits>
              </MapFrame>
            </Column>
          </Columns>
        </Container>
        <BottomEdge />
      </Page>
    </>
  );
}
